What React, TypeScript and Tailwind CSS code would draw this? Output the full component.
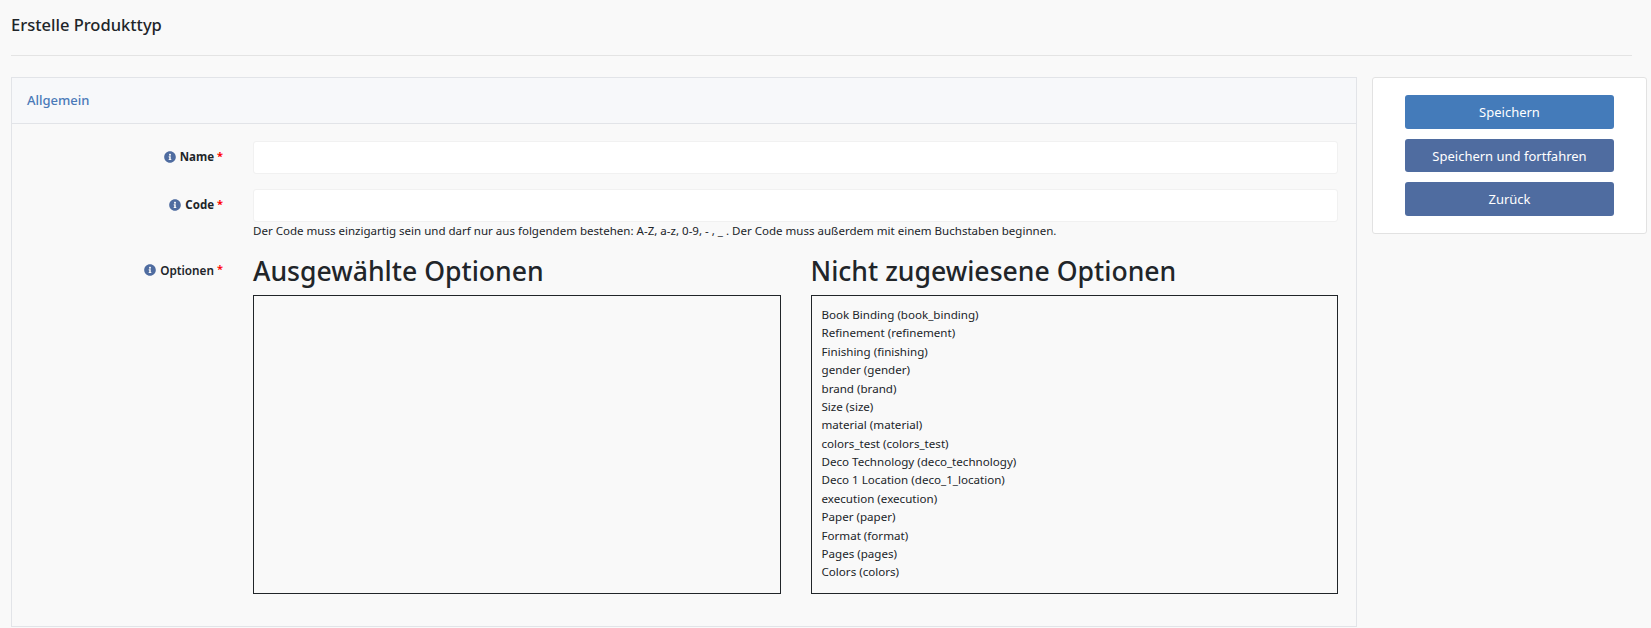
import React from 'react';
import { FaInfoCircle } from 'react-icons/fa';

const options = [
    'Book Binding (book_binding)',
    'Refinement (refinement)',
    'Finishing (finishing)',
    'gender (gender)',
    'brand (brand)',
    'Size (size)',
    'material (material)',
    'colors_test (colors_test)',
    'Deco Technology (deco_technology)',
    'Deco 1 Location (deco_1_location)',
    'execution (execution)',
    'Paper (paper)',
    'Format (format)',
    'Pages (pages)',
    'Colors (colors)',
];

const FieldLabel: React.FC<{ text: string; semibold?: boolean }> = ({ text, semibold }) => (
    <label className={`flex w-[212px] shrink-0 items-center justify-end gap-[3px] pr-[1px] text-[#212529] ${semibold ? 'text-[11.75px] leading-[18px] font-semibold' : 'text-[11.5px] leading-[18px] font-bold'}`}>
        <FaInfoCircle size={12} className="mr-[1px] text-[#4f6ca0]" />
        <span>{text}</span>
        <span className="relative top-[-1px] text-[11px] text-[#ff0000]">*</span>
    </label>
);

export default function App() {
    return (
        <div className="h-[628px] overflow-hidden bg-[#f9f9f9] px-[11px] font-['Noto_Sans',sans-serif] text-[#212529]">
            {/* Header */}
            <h1 className="pt-[14px] pb-[20px] text-[16.5px] leading-[21px] font-medium">Erstelle Produkttyp</h1>
            <hr className="mr-[8px] border-[#e4e4e4]" />

            <div className="mt-[21px] flex items-start gap-[15px]">
                {/* Main card */}
                <div className="h-[550px] w-[1346px] shrink-0 border border-[#e2e4e8]">
                    <div className="flex h-[46px] items-center border-b border-[#e2e4e8] bg-[#f7f8fa] pt-[1px] pl-[15px]">
                        <span className="text-[13px] font-medium text-[#4a7ab8]">Allgemein</span>
                    </div>

                    <div className="pt-[17px] pr-[18px]">
                        <div className="flex">
                            <div className="pt-[7px]"><FieldLabel text="Name" /></div>
                            <input className="ml-[29px] h-[33px] flex-1 rounded-[3px] border border-[#f1f1f1] bg-white" />
                        </div>

                        <div className="mt-[15px] flex">
                            <div className="pt-[7px]"><FieldLabel text="Code" /></div>
                            <div className="ml-[29px] flex-1">
                                <input className="block h-[33px] w-full rounded-[3px] border border-[#f1f1f1] bg-white" />
                                <p className="text-[11.54px] leading-[18px]">
                                    Der Code muss einzigartig sein und darf nur aus folgendem bestehen: A-Z, a-z, 0-9, - , _ . Der Code muss außerdem mit einem Buchstaben beginnen.
                                </p>
                            </div>
                        </div>

                        <div className="mt-[15px] flex">
                            <div className="pt-[6px]"><FieldLabel text="Optionen" semibold /></div>
                            <div className="ml-[29px] grid flex-1 grid-cols-2 gap-[30px]">
                                <div>
                                    <h2 className="mb-[7px] text-[26.6px] leading-[33px] font-[550]">Ausgewählte Optionen</h2>
                                    <div className="h-[299px] border border-[#212529]" />
                                </div>
                                <div>
                                    <h2 className="mb-[7px] text-[26.6px] leading-[33px] font-[550]">Nicht zugewiesene Optionen</h2>
                                    <ul className="h-[299px] border border-[#212529] pt-[10px] pl-[10px] text-[11.6px] leading-[18.375px]">
                                        {options.map((o) => (
                                            <li key={o}>{o}</li>
                                        ))}
                                    </ul>
                                </div>
                            </div>
                        </div>
                    </div>
                </div>

                {/* Actions */}
                <div className="flex h-[157px] w-[275px] shrink-0 flex-col gap-[10px] rounded-[3px] border border-[#e2e2e2] bg-white px-[32px] pt-[17px]">
                    <button className="h-[34px] rounded-[3px] bg-[#447bba] pt-[2px] text-[13px] text-white">Speichern</button>
                    <button className="h-[33px] rounded-[3px] bg-[#4f6ca0] pt-[2px] text-[13px] text-white">Speichern und fortfahren</button>
                    <button className="h-[34px] rounded-[3px] bg-[#4f6ca0] pt-[2px] text-[13px] text-white">Zurück</button>
                </div>
            </div>
        </div>
    );
}
